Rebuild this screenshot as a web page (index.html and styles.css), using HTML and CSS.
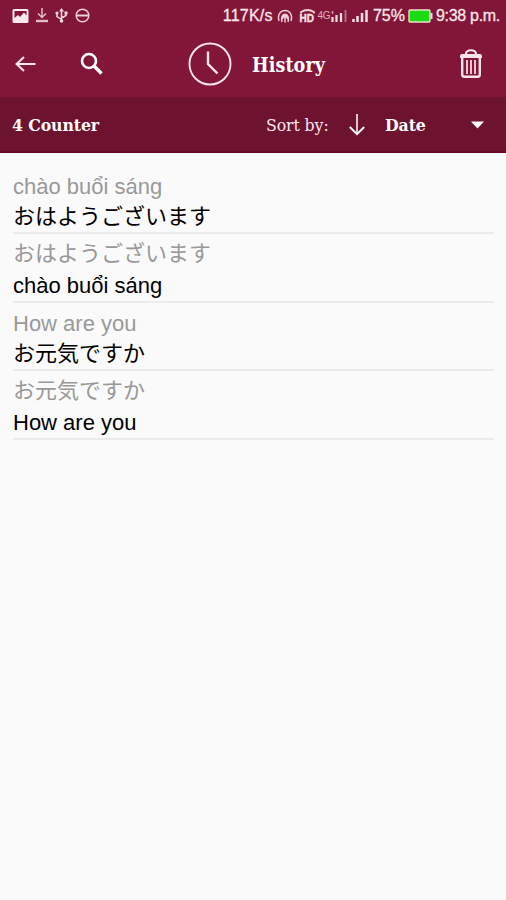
FILE: index.html
```html
<!DOCTYPE html>
<html lang="en">
<head>
    <meta charset="UTF-8">
    <meta name="viewport" content="width=device-width, initial-scale=1.0">
    <title>History</title>
    <link rel="stylesheet" href="styles.css">
</head>
<body>
    <div class="status-bar">
        <div class="notifications">
            <svg width="17" height="14" viewBox="0 0 17 14">
                <path d="M2 0h13a1.500 1.500 0 0 1 1.500 1.500v11a1.500 1.500 0 0 1-1.500 1.500h-13a1.500 1.500 0 0 1-1.500-1.500v-11a1.500 1.500 0 0 1 1.500-1.500zM2.500 2v7l3.500-3 2 2 4-4.500 2.500 3v-4.500z" fill="#fbe9ee" fill-rule="evenodd"/>
            </svg>
            <svg width="12" height="15" viewBox="0 0 12 15">
                <path d="M6 0v9M2 5.500l4 4 4-4" fill="none" stroke="#e3bbc7" stroke-width="1.500"/>
                <path d="M0 13h12" stroke="#e3bbc7" stroke-width="2.400"/>
            </svg>
            <svg width="13" height="15" viewBox="0 0 13 15">
                <path d="M6.500 2v11M6.500 11.500l-4.500-3v-3M6.500 10l4.500-2.500v-3" fill="none" stroke="#f3d9e0" stroke-width="1.500"/>
                <path d="M4 3.500l2.500-3.500 2.500 3.500z" fill="#f3d9e0"/>
                <circle cx="2" cy="5" r="1.600" fill="#f3d9e0"/>
                <path d="M9.500 3.500h3v3h-3z" fill="#f3d9e0"/>
                <circle cx="6.500" cy="13" r="1.800" fill="#f3d9e0"/>
            </svg>
            <svg width="15" height="15" viewBox="0 0 15 15">
                <circle cx="7.500" cy="7.500" r="6.300" fill="none" stroke="#efcfd8" stroke-width="1.500"/>
                <path d="M1.500 7.500h12" stroke="#efcfd8" stroke-width="2"/>
            </svg>
        </div>
        <div class="system">
            <span class="speed">117K/s</span>
            <svg class="hotspot" width="16" height="14" viewBox="0 0 16 14">
                <path d="M2 12c-4-14 16-14 12 0M5 13c-2.500-10.500 8.500-10.500 6 0M8 5.500v8M8 6l-3 4M8 6l3 4" fill="none" stroke="#eecbd5" stroke-width="1.500"/>
            </svg>
            <span class="hd">
                <svg width="15" height="5" viewBox="0 0 15 5">
                    <path d="M1 4.500v-1.500q6.500-4 13 0v1.500" fill="none" stroke="#f0d0d9" stroke-width="1.800"/>
                </svg>
                <span>HD</span>
            </span>
            <span class="network">4G</span>
            <svg class="signal-one" width="16" height="12" viewBox="0 0 16 12">
                <path d="M1.500 12v-5M5.500 12v-7M10 12v-9" stroke="#f5dfe5" stroke-width="2.200"/>
                <path d="M14.500 12v-12" stroke="#b56d82" stroke-width="2"/>
                <path d="M1.500 1v3" stroke="#d39bac" stroke-width="1.500"/>
            </svg>
            <svg class="signal-two" width="16" height="12" viewBox="0 0 16 12">
                <path d="M1.500 12v-3M5.500 12v-6M10 12v-9M14.500 12v-12" stroke="#f5dfe5" stroke-width="2.500"/>
            </svg>
            <span class="percent">75%</span>
            <svg class="battery" width="25" height="14" viewBox="0 0 25 14">
                <rect x="1" y="1" width="21" height="12" rx="1" fill="#1bdc12" stroke="#eadfca" stroke-width="1.400"/>
                <path d="M23.500 4v6" stroke="#eadfca" stroke-width="2"/>
            </svg>
            <span class="time">9:38 p.m.</span>
        </div>
    </div>

    <header class="toolbar">
        <svg class="back" width="22" height="16" viewBox="0 0 22 16">
            <path d="M20.500 8h-18.500M9 1l-7.500 7 7.500 7" fill="none" stroke="#fbe6eb" stroke-width="2"/>
        </svg>
        <svg class="search" width="24" height="24" viewBox="0 0 24 24">
            <circle cx="9" cy="9" r="7" fill="none" stroke="#fff" stroke-width="2.600"/>
            <path d="M14 14l7.500 7.500" stroke="#fff" stroke-width="3.400"/>
        </svg>
        <svg class="clock" width="44" height="44" viewBox="0 0 44 44">
            <circle cx="22" cy="22" r="20.500" fill="none" stroke="#fce6ec" stroke-width="1.900"/>
            <path d="M20 9.500v12.500l9.500 9.500" fill="none" stroke="#fce6ec" stroke-width="2.400"/>
        </svg>
        <h1>History</h1>
        <svg class="trash" width="24" height="30" viewBox="0 0 24 30">
            <path d="M7 5c0-5 10-5 10 0" fill="none" stroke="#fbe4ea" stroke-width="2.200"/>
            <path d="M1 9v-2q0-2 2-2h18q2 0 2 2v2z" fill="#fbe4ea"/>
            <path d="M3.200 9v16.500q0 2.300 2.300 2.300h13q2.300 0 2.300-2.300v-16.500" fill="none" stroke="#fbe4ea" stroke-width="2.400"/>
            <path d="M8 11v14M12 11v14M16 11v14" stroke="#ecc5d0" stroke-width="2"/>
        </svg>
    </header>

    <div class="sort-bar">
        <span class="counter">4 Counter</span>
        <span class="sort-label">Sort by:</span>
        <svg class="sort-arrow" width="16" height="22" viewBox="0 0 16 22">
            <path d="M8 0v20" stroke="#e3c3cc" stroke-width="2"/>
            <path d="M.8 13l7.200 7.200 7.200-7.200" fill="none" stroke="#fff" stroke-width="1.900"/>
        </svg>
        <span class="sort-value">Date</span>
        <svg class="caret" width="13" height="8" viewBox="0 0 13 8">
            <path d="M0 .5h13l-6.500 7z" fill="#fff"/>
        </svg>
    </div>

    <ul class="history">
        <li>
            <p class="source">chào buổi sáng</p>
            <p class="ja">おはようございます</p>
        </li>
        <li>
            <p class="source ja">おはようございます</p>
            <p>chào buổi sáng</p>
        </li>
        <li>
            <p class="source">How are you</p>
            <p class="ja">お元気ですか</p>
        </li>
        <li>
            <p class="source ja">お元気ですか</p>
            <p>How are you</p>
        </li>
    </ul>
</body>
</html>
```
FILE: styles.css
```css
* {
    box-sizing: border-box;
}

body {
    margin: 0;
    min-height: 900px;
    background-color: #fafafa;
    color: #000;
    font-family: "Liberation Sans", "Noto Sans CJK JP", sans-serif;
}

svg {
    display: block;
    flex-shrink: 0;
}

.status-bar {
    display: flex;
    justify-content: space-between;
    align-items: center;
    height: 31px;
    padding: 0 6px 0 12px;
    background-color: #821638;
    color: #fbe4ea;
    font-size: 16px;
    line-height: 31px;
    white-space: nowrap;
    -webkit-text-stroke: 0.3px #fbe4ea;
}

.notifications {
    display: flex;
    align-items: center;
    gap: 7px;
}

.system {
    display: flex;
    align-items: center;
}

.speed {
    letter-spacing: 0.2px;
}

.hotspot {
    margin-left: 4px;
}

.hd {
    width: 15px;
    margin-left: 7px;
    font-size: 10px;
    font-weight: bold;
    line-height: 9px;
}

.network {
    margin-left: 3px;
    font-size: 10px;
    letter-spacing: -0.5px;
    color: #e0b0be;
    -webkit-text-stroke: 0;
}

.signal-one {
    margin-left: 1px;
}

.signal-two {
    margin-left: 5px;
}

.percent {
    margin-left: 5px;
}

.battery {
    margin: 0 3px;
}

.time {
    letter-spacing: -0.3px;
}

/* Toolbar */
.toolbar {
    display: flex;
    align-items: center;
    height: 66px;
    padding: 0 23px 0 15px;
    background-color: #821638;
    color: #fff;
}

.search {
    margin-left: 43px;
}

.clock {
    margin-left: 84px;
}

.toolbar h1 {
    margin: 0 auto 0 20px;
    padding-top: 2px;
    font-family: "DejaVu Serif Condensed", "DejaVu Serif", serif;
    font-stretch: condensed;
    font-size: 19.5px;
    letter-spacing: 0.1px;
}

/* Sort bar */
.sort-bar {
    display: flex;
    align-items: center;
    height: 56px;
    padding: 2px 22px 0 12px;
    background-color: #6d122f;
    border-bottom: 2px solid #690720;
    color: #fbe4ea;
    font-family: "DejaVu Serif Condensed", "DejaVu Serif", serif;
    font-stretch: condensed;
    font-size: 17.5px;
    letter-spacing: -0.1px;
    white-space: nowrap;
}

.counter,
.sort-value {
    font-weight: bold;
    color: #fff;
}

.sort-label {
    width: 65px;
    margin-left: auto;
}

.sort-arrow {
    margin-left: 18px;
}

.sort-value {
    width: 86px;
    margin-left: 20px;
}

/* History list */
.history {
    margin: 0;
    padding: 13px 12px 0 13px;
    list-style: none;
    font-size: 22px;
}

.history li {
    height: 68.4px;
    padding-top: 3px;
    border-bottom: 2px solid #ebebeb;
}

.history p {
    height: 31px;
    margin: 0;
    line-height: 36px;
}

.history .source {
    color: #999;
}

.history .ja {
    font-family: "Noto Sans CJK JP", sans-serif;
    line-height: 29px;
}
```
